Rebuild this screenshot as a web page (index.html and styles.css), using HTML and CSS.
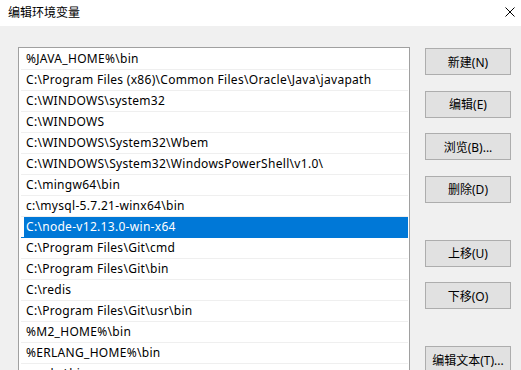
FILE: index.html
```html
<!DOCTYPE html>
<html lang="zh-CN">
<head>
    <meta charset="UTF-8">
    <title>编辑环境变量</title>
    <link rel="stylesheet" href="styles.css">
</head>
<body>
    <div class="titlebar">
        <span class="title">编辑环境变量</span>
        <svg class="close" width="10" height="10" viewBox="0 0 10 10">
            <path d="M0.5 0.5 L9.5 9.5 M9.5 0.5 L0.5 9.5" stroke="#000" stroke-width="1" fill="none"/>
        </svg>
    </div>

    <div class="content">
        <div class="path-list">
            <div class="row">%JAVA_HOME%\bin</div>
            <div class="row">C:\Program Files (x86)\Common Files\Oracle\Java\javapath</div>
            <div class="row">C:\WINDOWS\system32</div>
            <div class="row">C:\WINDOWS</div>
            <div class="row">C:\WINDOWS\System32\Wbem</div>
            <div class="row">C:\WINDOWS\System32\WindowsPowerShell\v1.0\</div>
            <div class="row">C:\mingw64\bin</div>
            <div class="row">c:\mysql-5.7.21-winx64\bin</div>
            <div class="row selected">C:\node-v12.13.0-win-x64</div>
            <div class="row">C:\Program Files\Git\cmd</div>
            <div class="row">C:\Program Files\Git\bin</div>
            <div class="row">C:\redis</div>
            <div class="row">C:\Program Files\Git\usr\bin</div>
            <div class="row">%M2_HOME%\bin</div>
            <div class="row">%ERLANG_HOME%\bin</div>
            <div class="row">cmake\bin</div>
        </div>

        <div class="buttons">
            <div class="btn-group">
                <button>新建(N)</button>
                <button>编辑(E)</button>
                <button>浏览(B)...</button>
                <button>删除(D)</button>
            </div>
            <div class="btn-group">
                <button>上移(U)</button>
                <button>下移(O)</button>
            </div>
            <div class="btn-group">
                <button>编辑文本(T)...</button>
            </div>
        </div>
    </div>
</body>
</html>
```

FILE: styles.css
```css
body {
    margin: 0;
    height: 370px;
    overflow: hidden;
    background-color: #f0f0f0;
    font-family: "Noto Sans", "Noto Sans CJK SC", sans-serif;
    font-size: 12px;
    color: #000;
}

.titlebar {
    height: 26px;
    background-color: #fff;
    display: flex;
    align-items: center;
    justify-content: space-between;
    padding: 0 6px 3px 8px;
    box-sizing: border-box;
}

.title {
    font-family: "Noto Sans CJK SC", sans-serif;
    font-size: 12px;
}

.content {
    display: flex;
    gap: 15px;
    padding: 21px 0 0 18px;
}

.path-list {
    width: 392px;
    height: 340px;
    box-sizing: border-box;
    background-color: #fff;
    border: 1px solid #a0a0a0;
    border-bottom: none;
    padding: 1px 1px 0 2px;
    font-size: 12px;
    letter-spacing: 0.3px;
}

.row {
    height: 20px;
    line-height: 20px;
    padding-left: 5px;
    border-bottom: 1px solid #efefef;
    white-space: nowrap;
}

.row.selected {
    color: #fff;
    background: linear-gradient(#0078d7, #0078d7) 3px 0 / calc(100% - 3px) 100% no-repeat;
    border-bottom-color: #0078d7;
}

.buttons {
    display: flex;
    flex-direction: column;
    gap: 37px;
    padding-top: 1px;
}

.btn-group {
    display: flex;
    flex-direction: column;
    gap: 15.5px;
}

button {
    width: 86px;
    height: 27px;
    padding: 0;
    background-color: #e1e1e1;
    border: 1px solid #adadad;
    font-family: "Noto Sans", "Noto Sans CJK SC", sans-serif;
    font-size: 12px;
    color: #000;
}
```
